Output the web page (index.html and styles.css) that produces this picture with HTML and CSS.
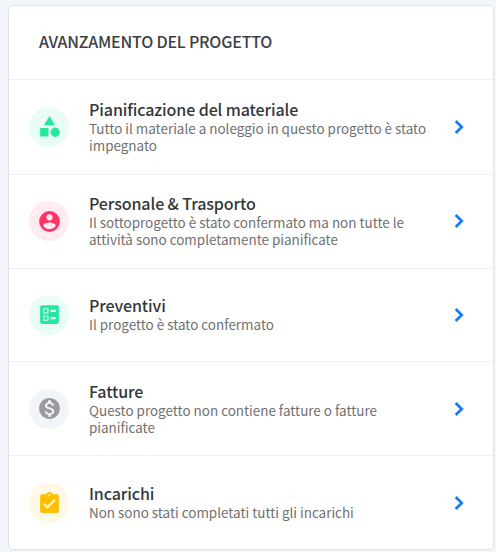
FILE: index.html
```html
<!DOCTYPE html>
<html lang="it">
<head>
<meta charset="utf-8">
<title>Avanzamento del progetto</title>
<link rel="stylesheet" href="styles.css">
</head>
<body>
<section class="card">
  <h2 class="card-title">AVANZAMENTO DEL PROGETTO</h2>
  <div class="row">
    <span class="badge green"><svg viewBox="0 0 24 24"><path d="M12 2l-5.300 8.800h10.600z"/><circle cx="17.500" cy="17.500" r="4.500"/><rect x="3" y="13.500" width="8" height="8" rx=".5"/></svg></span>
    <div class="text"><h3>Pianificazione del materiale</h3><p>Tutto il materiale a noleggio in questo progetto è stato<br>impegnato</p></div>
    <svg class="chevron" viewBox="0 0 10 16"><path d="M1.700 2l6 6-6 6"/></svg>
  </div>
  <div class="row">
    <span class="badge red"><svg viewBox="0 0 24 24"><path d="M12 2a10 10 0 1 0 0 20 10 10 0 0 0 0-20zm0 3a3 3 0 1 1 0 6 3 3 0 0 1 0-6zm0 14.200a7.200 7.200 0 0 1-6-3.220c.03-1.990 4-3.080 6-3.080s5.970 1.090 6 3.080a7.200 7.200 0 0 1-6 3.220z"/></svg></span>
    <div class="text"><h3>Personale &amp; Trasporto</h3><p>Il sottoprogetto è stato confermato ma non tutte le<br>attività sono completamente pianificate</p></div>
    <svg class="chevron" viewBox="0 0 10 16"><path d="M1.700 2l6 6-6 6"/></svg>
  </div>
  <div class="row">
    <span class="badge green"><svg viewBox="0 0 24 24"><path fill-rule="evenodd" d="M13 7.500h5v2h-5zm0 7h5v2h-5zM19 3H5a2 2 0 0 0-2 2v14a2 2 0 0 0 2 2h14a2 2 0 0 0 2-2V5a2 2 0 0 0-2-2zM11 6v5H6V6zm0 7v5H6v-5zM7 7v3h3V7zm0 7v3h3v-3z"/></svg></span>
    <div class="text"><h3>Preventivi</h3><p>Il progetto è stato confermato</p></div>
    <svg class="chevron" viewBox="0 0 10 16"><path d="M1.700 2l6 6-6 6"/></svg>
  </div>
  <div class="row">
    <span class="badge gray"><svg viewBox="0 0 24 24"><path d="M12 2C6.480 2 2 6.480 2 12s4.480 10 10 10 10-4.480 10-10S17.520 2 12 2zm1.410 16.090V20h-2.670v-1.930c-1.710-.36-3.160-1.460-3.270-3.400h1.960c.1 1.050.82 1.870 2.650 1.870 1.960 0 2.400-.98 2.400-1.590 0-.83-.44-1.610-2.670-2.140-2.480-.6-4.180-1.620-4.180-3.670 0-1.720 1.390-2.840 3.110-3.210V4h2.670v1.950c1.860.45 2.790 1.860 2.850 3.390H14.300c-.05-1.110-.64-1.870-2.220-1.870-1.500 0-2.400.68-2.400 1.640 0 .84.65 1.390 2.670 1.910s4.180 1.390 4.180 3.910c-.01 1.830-1.380 2.830-3.120 3.160z"/></svg></span>
    <div class="text"><h3>Fatture</h3><p>Questo progetto non contiene fatture o fatture<br>pianificate</p></div>
    <svg class="chevron" viewBox="0 0 10 16"><path d="M1.700 2l6 6-6 6"/></svg>
  </div>
  <div class="row">
    <span class="badge amber"><svg viewBox="0 0 24 24"><path d="M19 3h-4.180C14.400 1.840 13.300 1 12 1s-2.400.84-2.820 2H5c-1.100 0-2 .9-2 2v14c0 1.100.9 2 2 2h14c1.100 0 2-.9 2-2V5c0-1.100-.9-2-2-2zm-7 0c.55 0 1 .45 1 1s-.45 1-1 1-1-.45-1-1 .45-1 1-1zm-2 14l-4-4 1.410-1.410L10 14.170l6.590-6.590L18 9l-8 8z"/></svg></span>
    <div class="text"><h3>Incarichi</h3><p>Non sono stati completati tutti gli incarichi</p></div>
    <svg class="chevron" viewBox="0 0 10 16"><path d="M1.700 2l6 6-6 6"/></svg>
  </div>
</section>
</body>
</html>
```
FILE: styles.css
```css
* { box-sizing: border-box; margin: 0; padding: 0; }
body {
  height: 552px;
  overflow: hidden;
  padding: 5px 2px 0 8px;
  background: #f2f6fb;
  font-family: "Noto Sans CJK SC", "Open Sans", sans-serif;
}
.card {
  height: 545px;
  border: 1px solid #dfe2e6;
  border-radius: 5px;
  background: #fff;
}
.card-title {
  height: 74px;
  padding-left: 30px;
  border-bottom: 1px solid #f0f1f2;
  color: #3c4043;
  font-size: 16px;
  font-weight: 500;
  letter-spacing: -0.200px;
  line-height: 70px;
}
.row {
  display: flex;
  align-items: center;
  height: 93.800px;
  padding: 0 29px 0 20px;
}
.row + .row { border-top: 1px solid #f0f1f2; }
.row:last-child { padding-top: 1px; }
.badge {
  display: flex;
  align-items: center;
  justify-content: center;
  width: 40px;
  height: 40px;
  margin-right: 20px;
  border-radius: 50%;
}
.badge svg { width: 25px; height: 25px; fill: currentColor; }
.green { background: #e9fcf5; color: #26e7a0; }
.red { background: #ffebf0; color: #ff3366; }
.gray { background: #f1f5f9; color: #9b9b9b; }
.amber { background: #fff8e6; color: #ffbf00; }
.text {
  flex: 1;
  padding-bottom: 1.200px;
  white-space: nowrap;
}
.text h3 {
  color: #33373a;
  font-size: 16px;
  font-weight: 500;
  letter-spacing: -0.100px;
  line-height: 21px;
}
.text p {
  color: #707070;
  font-size: 13.450px;
  line-height: 17px;
}
.chevron {
  width: 10px;
  height: 16px;
  fill: none;
  stroke: #177dff;
  stroke-width: 2.800;
}
```
